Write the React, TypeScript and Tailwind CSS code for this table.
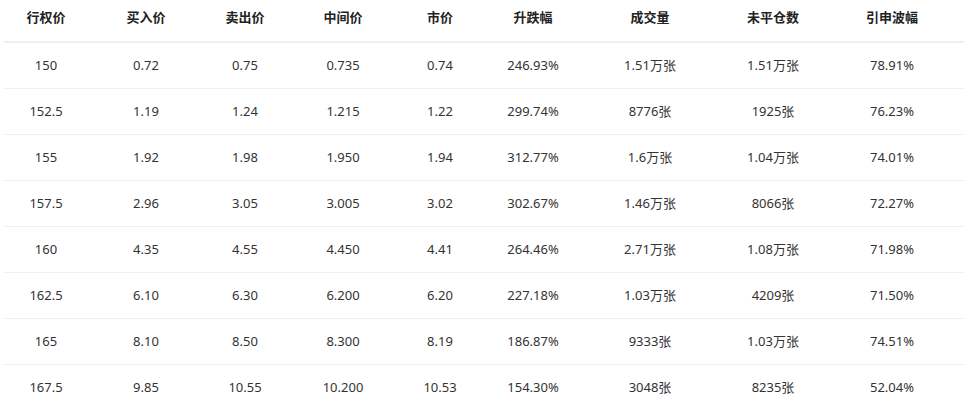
const headers = ["行权价", "买入价", "卖出价", "中间价", "市价", "升跌幅", "成交量", "未平仓数", "引申波幅"];

const rows = [
  ["150", "0.72", "0.75", "0.735", "0.74", "246.93%", "1.51万张", "1.51万张", "78.91%"],
  ["152.5", "1.19", "1.24", "1.215", "1.22", "299.74%", "8776张", "1925张", "76.23%"],
  ["155", "1.92", "1.98", "1.950", "1.94", "312.77%", "1.6万张", "1.04万张", "74.01%"],
  ["157.5", "2.96", "3.05", "3.005", "3.02", "302.67%", "1.46万张", "8066张", "72.27%"],
  ["160", "4.35", "4.55", "4.450", "4.41", "264.46%", "2.71万张", "1.08万张", "71.98%"],
  ["162.5", "6.10", "6.30", "6.200", "6.20", "227.18%", "1.03万张", "4209张", "71.50%"],
  ["165", "8.10", "8.50", "8.300", "8.19", "186.87%", "9333张", "1.03万张", "74.51%"],
  ["167.5", "9.85", "10.55", "10.200", "10.53", "154.30%", "3048张", "8235张", "52.04%"],
];

const cols = "grid grid-cols-[84px_116px_82px_114px_80px_106px_128px_118px_120px_12px]";

export default function App() {
  return (
    <div className="w-[968px] h-[408px] bg-white overflow-hidden px-[4px] font-['Noto_Sans','Noto_Sans_CJK_SC',sans-serif] text-[13px] text-[#333]">
      <div className={`${cols} h-[43px] border-b-2 border-[#efefef]`}>
        {headers.map((h) => (
          <div key={h} className="flex items-center justify-center pb-[6px] font-bold text-[#222]">
            {h}
          </div>
        ))}
        <div />
      </div>
      {rows.map((r, i) => (
        <div key={i} className={`${cols} h-[46px] border-b border-[#f0f0f0]`}>
          {r.map((c, j) => (
            <div key={j} className="flex items-center justify-center">
              {c}
            </div>
          ))}
          <div />
        </div>
      ))}
    </div>
  );
}
